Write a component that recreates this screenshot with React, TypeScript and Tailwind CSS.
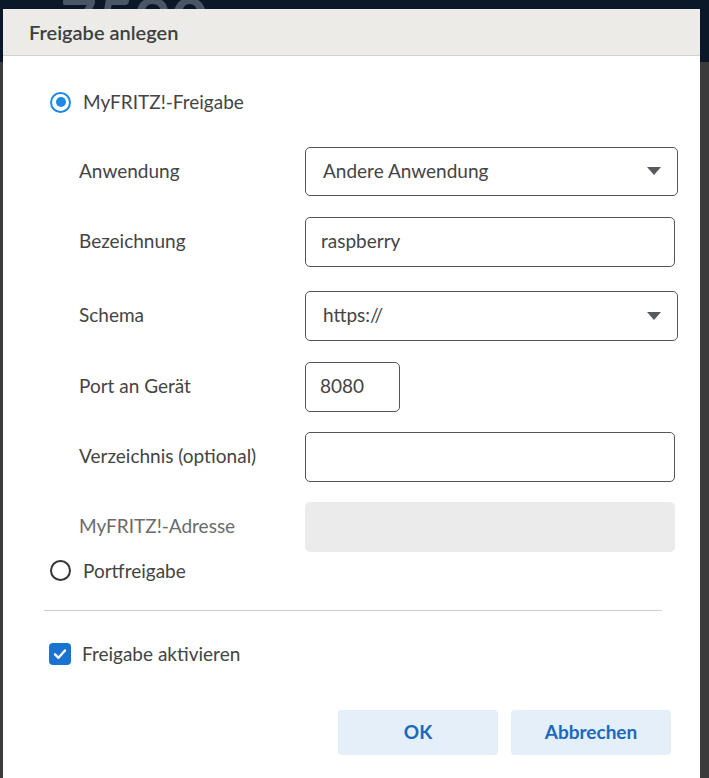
import React from "react";

const Caret = () => (
  <svg width="14" height="8" viewBox="0 0 14 8" className="shrink-0">
    <path d="M0 0 H14 L7 8 Z" fill="#555a60" />
  </svg>
);

const Row = ({ label, muted, className, children }: { label: string; muted?: boolean; className?: string; children: React.ReactNode }) => (
  <div className={`flex items-center ${className ?? ""}`}>
    <div className={`w-[226px] shrink-0 ${muted ? "text-[#6b6b6b]" : "text-[#444]"}`}>{label}</div>
    {children}
  </div>
);

export default function App() {
  return (
    <div className="relative h-[778px] w-[709px] overflow-hidden bg-[#3b3b3b] font-['Lato',sans-serif] text-[19px]">
      <div className="h-[62px] bg-[#0b1829] pl-[60px] text-[64px] font-bold leading-[40px] text-[#4a5565]">
        7590
      </div>
      <div className="absolute left-[3px] top-[9px] w-[697px] bg-white">
        <div className="flex h-[47px] items-center border-b border-[#d2d2d0] bg-[#ecebe7] pl-[26px] text-[20px] font-semibold text-[#3f3f3f]">
          Freigabe anlegen
        </div>
        <div className="pl-[41px] pr-[20px] pt-[32px] pb-[25px]">
          <label className="ml-[6px] flex items-center gap-[12px] text-[#444]">
            <span className="flex h-[21px] w-[21px] items-center justify-center rounded-full border-[2.5px] border-[#1e88e5]">
              <span className="h-[10px] w-[10px] rounded-full bg-[#1e88e5]" />
            </span>
            MyFRITZ!-Freigabe
          </label>
          <div className="mt-[30px] flex flex-col gap-[21px] pl-[35px]">
            <Row label="Anwendung">
              <div className="flex h-[49px] w-[373px] shrink-0 items-center justify-between rounded-[5px] border border-[#555] pl-[17px] pr-[16px] text-[#444]">
                Andere Anwendung
                <Caret />
              </div>
            </Row>
            <Row label="Bezeichnung">
              <div className="flex h-[50px] w-[370px] shrink-0 items-center rounded-[5px] border border-[#555] pl-[15px] text-[#444]">
                raspberry
              </div>
            </Row>
            <Row label="Schema" className="mt-[3px]">
              <div className="flex h-[50px] w-[373px] shrink-0 items-center justify-between rounded-[5px] border border-[#555] pl-[17px] pr-[16px] text-[#444]">
                https://
                <Caret />
              </div>
            </Row>
            <Row label="Port an Gerät">
              <div className="flex h-[50px] w-[95px] shrink-0 items-center rounded-[5px] border border-[#555] pl-[14px] text-[#444]">
                8080
              </div>
            </Row>
            <Row label="Verzeichnis (optional)" className="-mt-[1px]">
              <div className="h-[50px] w-[370px] shrink-0 rounded-[5px] border border-[#555]" />
            </Row>
            <Row label="MyFRITZ!-Adresse" muted className="-mt-[1px]">
              <div className="h-[50px] w-[370px] shrink-0 rounded-[5px] bg-[#ebebeb]" />
            </Row>
          </div>
          <label className="ml-[6px] mt-[5px] flex items-center gap-[12px] text-[#444]">
            <span className="h-[21px] w-[21px] rounded-full border-[2px] border-[#333]" />
            Portfreigabe
          </label>
          <div className="mt-[25px] mr-[18px] border-t border-[#cfcfcf]" />
          <label className="mt-[29px] flex items-center gap-[11px] pl-[5px] text-[#444]">
            <span className="flex h-[22px] w-[22px] items-center justify-center rounded-[4px] bg-[#1a73d0]">
              <svg width="16" height="16" viewBox="0 0 16 16">
                <path d="M3 8.3 L6.5 11.8 L13 4.5" fill="none" stroke="white" strokeWidth="2.4" strokeLinecap="round" strokeLinejoin="round" />
              </svg>
            </span>
            Freigabe aktivieren
          </label>
          <div className="mt-[41px] flex justify-end gap-[13px] pr-[9px]">
            <button className="h-[45px] w-[160px] rounded-[4px] bg-[#e4eff9] font-bold text-[#1c69bb]">OK</button>
            <button className="h-[45px] w-[160px] rounded-[4px] bg-[#e4eff9] font-bold text-[#1c69bb]">Abbrechen</button>
          </div>
        </div>
      </div>
    </div>
  );
}
